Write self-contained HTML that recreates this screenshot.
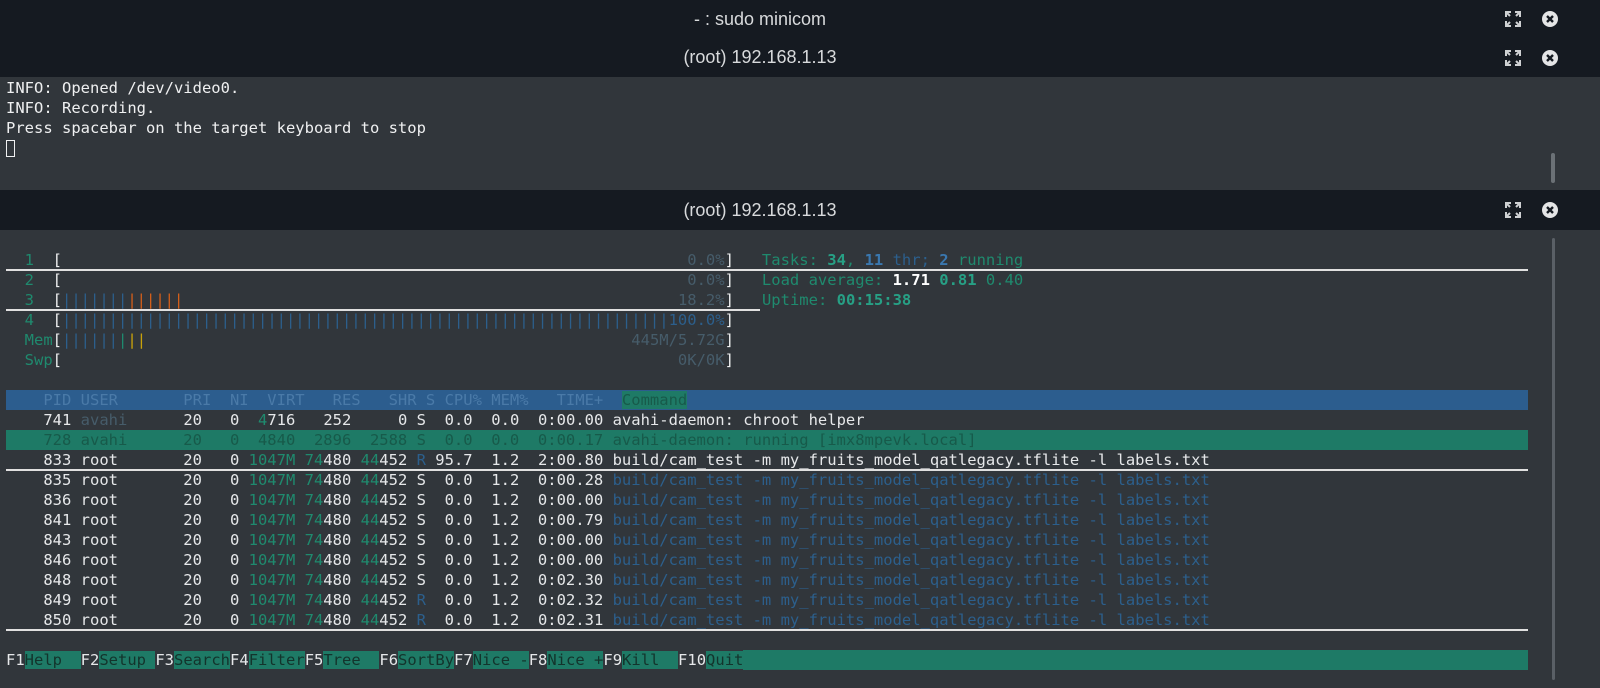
<!DOCTYPE html>
<html><head><meta charset="utf-8"><style>
*{margin:0;padding:0;box-sizing:border-box}
body{width:1600px;height:688px;overflow:hidden;background:#31363b;position:relative;font-family:"DejaVu Sans Mono","Liberation Mono",monospace}
.tb{position:absolute;left:0;width:1600px;background:#151a21;color:#d8dadc;font-family:"Liberation Sans",sans-serif;font-size:18px}
.tt{position:absolute;left:0;width:1520px;top:0;text-align:center}
.ic{position:absolute;top:50%;transform:translateY(-50%)}
.ln{position:absolute;left:6px;white-space:pre;font-size:15.5px;line-height:20px;height:20px;color:#e6e8ea;letter-spacing:0.0px}
.g{color:#1f8a6e}.d{color:#465c6a}.b{color:#2c5f8c}.o{color:#d35f1a}.y{color:#c9a20a}.w{color:#eff0f1}
.bt{color:#27a085;font-weight:bold}.bb{color:#3a78b0;font-weight:bold}.bw{color:#fff;font-weight:bold}
.hl{position:absolute;height:2px;background:#e0e0e0}
.fk{background:#1e7a66;color:#13342c}
</style></head><body>
<div class="tb" style="top:0;height:38px;line-height:38px"><div class="tt">- : sudo minicom</div>
<svg class="ic" style="left:1504px" width="18" height="18" viewBox="0 0 18 18" fill="none" stroke="#cfd1d3" stroke-width="2"><path d="M2 7V2h5M2 2l4 4M16 7V2h-5M16 2l-4 4M2 11v5h5M2 16l4-4M16 11v5h-5M16 16l-4-4"/></svg>
<svg class="ic" style="left:1541px" width="18" height="18" viewBox="0 0 18 18"><circle cx="9" cy="9" r="8" fill="#e4e5e6"/><path d="M6 6l6 6M12 6l-6 6" stroke="#151a21" stroke-width="2.4"/></svg></div>
<div class="tb" style="top:38px;height:39px;line-height:39px"><div class="tt">(root) 192.168.1.13</div>
<svg class="ic" style="left:1504px" width="18" height="18" viewBox="0 0 18 18" fill="none" stroke="#cfd1d3" stroke-width="2"><path d="M2 7V2h5M2 2l4 4M16 7V2h-5M16 2l-4 4M2 11v5h5M2 16l4-4M16 11v5h-5M16 16l-4-4"/></svg>
<svg class="ic" style="left:1541px" width="18" height="18" viewBox="0 0 18 18"><circle cx="9" cy="9" r="8" fill="#e4e5e6"/><path d="M6 6l6 6M12 6l-6 6" stroke="#151a21" stroke-width="2.4"/></svg></div>
<div class="ln w" style="top:78px">INFO: Opened /dev/video0.</div>
<div class="ln w" style="top:98px">INFO: Recording.</div>
<div class="ln w" style="top:118px">Press spacebar on the target keyboard to stop</div>
<div style="position:absolute;left:6px;top:140px;width:9px;height:17px;border:1px solid #eff0f1"></div>
<div style="position:absolute;left:1551px;top:153px;width:4px;height:30px;background:#6b7176;border-radius:2px"></div>
<div class="tb" style="top:190px;height:40px;line-height:40px"><div class="tt">(root) 192.168.1.13</div>
<svg class="ic" style="left:1504px" width="18" height="18" viewBox="0 0 18 18" fill="none" stroke="#cfd1d3" stroke-width="2"><path d="M2 7V2h5M2 2l4 4M16 7V2h-5M16 2l-4 4M2 11v5h5M2 16l4-4M16 11v5h-5M16 16l-4-4"/></svg>
<svg class="ic" style="left:1541px" width="18" height="18" viewBox="0 0 18 18"><circle cx="9" cy="9" r="8" fill="#e4e5e6"/><path d="M6 6l6 6M12 6l-6 6" stroke="#151a21" stroke-width="2.4"/></svg></div>
<div style="position:absolute;left:1552px;top:238px;width:3px;height:442px;background:#5a6066;border-radius:2px"></div>

<div class="ln" style="top:250px"><span class="g">  1  </span><span class="w">[</span>                                                                   <span class="d">0.0%</span><span class="w">]</span>   <span class="g">Tasks: </span><span class="bt">34</span><span class="g">, </span><span class="bb">11</span><span class="b"> thr; </span><span class="bb">2</span><span class="g"> running</span></div>
<div class="ln" style="top:270px"><span class="g">  2  </span><span class="w">[</span>                                                                   <span class="d">0.0%</span><span class="w">]</span>   <span class="g">Load average: </span><span class="bw">1.71 </span><span class="bt">0.81 </span><span class="g">0.40</span></div>
<div class="ln" style="top:290px"><span class="g">  3  </span><span class="w">[</span><span class="b">|||||||</span><span class="o">||||||</span>                                                     <span class="d">18.2%</span><span class="w">]</span>   <span class="g">Uptime: </span><span class="bt">00:15:38</span></div>
<div class="ln" style="top:310px"><span class="g">  4  </span><span class="w">[</span><span class="b">|||||||||||||||||||||||||||||||||||||||||||||||||||||||||||||||||100.0%</span><span class="w">]</span></div>
<div class="ln" style="top:330px"><span class="g">  Mem</span><span class="w">[</span><span class="b">||||||</span><span class="g">|</span><span class="y">||</span>                                                    <span class="d">445M/5.72G</span><span class="w">]</span></div>
<div class="ln" style="top:350px"><span class="g">  Swp</span><span class="w">[</span>                                                                  <span class="d">0K/0K</span><span class="w">]</span></div>
<div class="hl" style="left:6px;top:269px;width:1522px"></div>
<div class="hl" style="left:6px;top:309px;width:754px"></div>

<div style="position:absolute;left:6px;top:390px;width:1522px;height:20px;background:#2c5d8e"></div>
<div class="ln" style="top:390px;color:#4a7aa8">    PID USER       PRI  NI  VIRT   RES   SHR S CPU% MEM%   TIME+  <span style="background:#1e7a66;color:#175a4a">Command</span></div>
<div class="ln" style="top:410px">    741 <span class="d">avahi</span>      20   0  <span class="g">4</span>716   252     0 S  0.0  0.0  0:00.00 avahi-daemon: chroot helper</div>
<div style="position:absolute;left:6px;top:430px;width:1522px;height:20px;background:#1e7a66"></div>
<div class="ln" style="top:430px;color:#175a4a">    728 avahi      20   0  4840  2896  2588 S  0.0  0.0  0:00.17 avahi-daemon: running [imx8mpevk.local]</div>
<div class="ln" style="top:450px">    833 root       20   0 <span class="g">1047M 74</span>480 <span class="g">44</span>452 <span class="b">R</span> 95.7  1.2  2:00.80 build/cam_test -m my_fruits_model_qatlegacy.tflite -l labels.txt</div>
<div class="hl" style="left:6px;top:469px;width:1522px"></div>
<div class="ln" style="top:470px">    835 root       20   0 <span class="g">1047M 74</span>480 <span class="g">44</span>452 S  0.0  1.2  0:00.28 <span class="b">build/cam_test -m my_fruits_model_qatlegacy.tflite -l labels.txt</span></div>
<div class="ln" style="top:490px">    836 root       20   0 <span class="g">1047M 74</span>480 <span class="g">44</span>452 S  0.0  1.2  0:00.00 <span class="b">build/cam_test -m my_fruits_model_qatlegacy.tflite -l labels.txt</span></div>
<div class="ln" style="top:510px">    841 root       20   0 <span class="g">1047M 74</span>480 <span class="g">44</span>452 S  0.0  1.2  0:00.79 <span class="b">build/cam_test -m my_fruits_model_qatlegacy.tflite -l labels.txt</span></div>
<div class="ln" style="top:530px">    843 root       20   0 <span class="g">1047M 74</span>480 <span class="g">44</span>452 S  0.0  1.2  0:00.00 <span class="b">build/cam_test -m my_fruits_model_qatlegacy.tflite -l labels.txt</span></div>
<div class="ln" style="top:550px">    846 root       20   0 <span class="g">1047M 74</span>480 <span class="g">44</span>452 S  0.0  1.2  0:00.00 <span class="b">build/cam_test -m my_fruits_model_qatlegacy.tflite -l labels.txt</span></div>
<div class="ln" style="top:570px">    848 root       20   0 <span class="g">1047M 74</span>480 <span class="g">44</span>452 S  0.0  1.2  0:02.30 <span class="b">build/cam_test -m my_fruits_model_qatlegacy.tflite -l labels.txt</span></div>
<div class="ln" style="top:590px">    849 root       20   0 <span class="g">1047M 74</span>480 <span class="g">44</span>452 <span class="b">R</span>  0.0  1.2  0:02.32 <span class="b">build/cam_test -m my_fruits_model_qatlegacy.tflite -l labels.txt</span></div>
<div class="ln" style="top:610px">    850 root       20   0 <span class="g">1047M 74</span>480 <span class="g">44</span>452 <span class="b">R</span>  0.0  1.2  0:02.31 <span class="b">build/cam_test -m my_fruits_model_qatlegacy.tflite -l labels.txt</span></div>
<div class="hl" style="left:6px;top:629px;width:1522px"></div>
<div style="position:absolute;left:6px;top:650px;width:1522px;height:20px;background:#1e7a66"></div>
<div class="ln" style="top:650px;background:#31363b">F1<span class="fk">Help  </span>F2<span class="fk">Setup </span>F3<span class="fk">Search</span>F4<span class="fk">Filter</span>F5<span class="fk">Tree  </span>F6<span class="fk">SortBy</span>F7<span class="fk">Nice -</span>F8<span class="fk">Nice +</span>F9<span class="fk">Kill  </span>F10<span class="fk">Quit</span></div>
</body></html>
